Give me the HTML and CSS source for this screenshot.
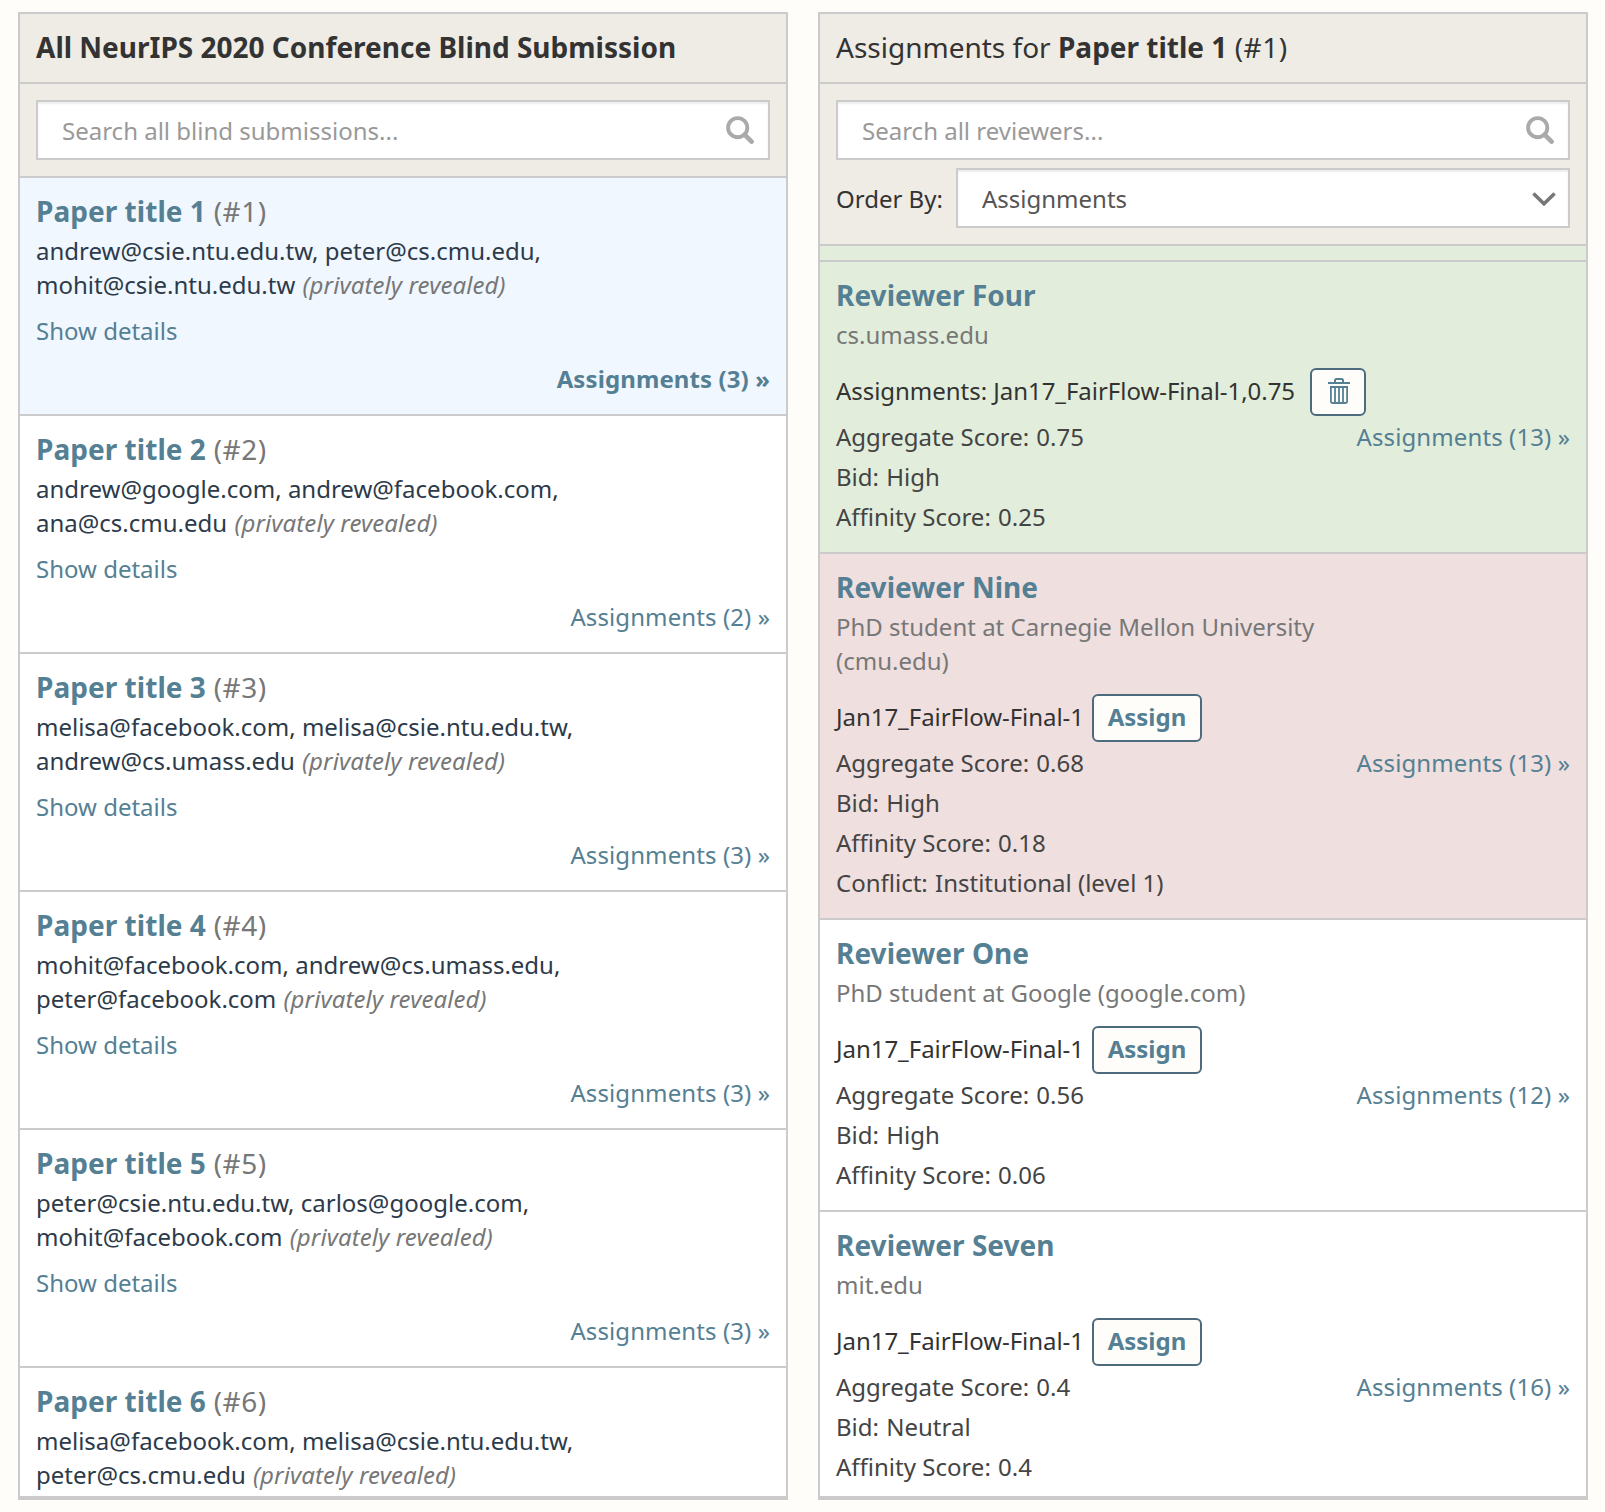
FILE: index.html
```html
<!DOCTYPE html>
<html lang="en">
<head>
<meta charset="utf-8">
<title>Assignment Browser</title>
<link rel="stylesheet" href="styles.css">
</head>
<body>
<svg class="sprite" aria-hidden="true">
  <symbol id="icon-search" viewBox="0 0 28 28"><circle cx="11.7" cy="11.7" r="9.6" fill="none" stroke="currentColor" stroke-width="3.9"/><path d="M18.6 18.6 25.6 25.6" stroke="currentColor" stroke-width="4.6" stroke-linecap="round"/></symbol>
  <symbol id="icon-chevron" viewBox="0 0 24 14"><path d="M1.4 1.5 12 11.8 22.6 1.5" fill="none" stroke="currentColor" stroke-width="3.6"/></symbol>
  <symbol id="icon-trash" viewBox="0 0 22 26"><path d="M0 5h22M7 5V2.5Q7 1 8.500 1h5Q15 1 15 2.500V5M2 9h18" fill="none" stroke="currentColor" stroke-width="2"/><path d="M2.900 9v14.500Q2.900 25 4.400 25h13.200Q19.100 25 19.100 23.500V9M7 9v16M11 9v16M15 9v16" fill="none" stroke="currentColor" stroke-width="1.800"/></symbol>
</svg>
<main class="browser">
  <section class="column">
    <h1 class="column-title"><strong>All NeurIPS 2020 Conference Blind Submission</strong></h1>
    <div class="filters">
      <div class="field placeholder"><span>Search all blind submissions...</span><svg class="search-icon"><use href="#icon-search"/></svg></div>
    </div>
    <ul class="items">
      <li class="item paper selected">
        <h2><a>Paper title 1</a> (#1)</h2>
        <p class="authors"><a>andrew@csie.ntu.edu.tw</a>, <a>peter@cs.cmu.edu</a>, <a>mohit@csie.ntu.edu.tw</a> <em>(privately revealed)</em></p>
        <a class="details">Show details</a>
        <a class="count">Assignments (3) »</a>
      </li>
      <li class="item paper">
        <h2><a>Paper title 2</a> (#2)</h2>
        <p class="authors"><a>andrew@google.com</a>, <a>andrew@facebook.com</a>, <a>ana@cs.cmu.edu</a> <em>(privately revealed)</em></p>
        <a class="details">Show details</a>
        <a class="count">Assignments (2) »</a>
      </li>
      <li class="item paper">
        <h2><a>Paper title 3</a> (#3)</h2>
        <p class="authors"><a>melisa@facebook.com</a>, <a>melisa@csie.ntu.edu.tw</a>, <a>andrew@cs.umass.edu</a> <em>(privately revealed)</em></p>
        <a class="details">Show details</a>
        <a class="count">Assignments (3) »</a>
      </li>
      <li class="item paper">
        <h2><a>Paper title 4</a> (#4)</h2>
        <p class="authors"><a>mohit@facebook.com</a>, <a>andrew@cs.umass.edu</a>, <a>peter@facebook.com</a> <em>(privately revealed)</em></p>
        <a class="details">Show details</a>
        <a class="count">Assignments (3) »</a>
      </li>
      <li class="item paper">
        <h2><a>Paper title 5</a> (#5)</h2>
        <p class="authors"><a>peter@csie.ntu.edu.tw</a>, <a>carlos@google.com</a>, <a>mohit@facebook.com</a> <em>(privately revealed)</em></p>
        <a class="details">Show details</a>
        <a class="count">Assignments (3) »</a>
      </li>
      <li class="item paper">
        <h2><a>Paper title 6</a> (#6)</h2>
        <p class="authors"><a>melisa@facebook.com</a>, <a>melisa@csie.ntu.edu.tw</a>, <a>peter@cs.cmu.edu</a> <em>(privately revealed)</em></p>
      </li>
    </ul>
  </section>

  <section class="column">
    <h1 class="column-title">Assignments for <strong>Paper title 1</strong> <span class="number">(#1)</span></h1>
    <div class="filters">
      <div class="field placeholder"><span>Search all reviewers...</span><svg class="search-icon"><use href="#icon-search"/></svg></div>
      <div class="order">
        <span class="order-label">Order By:</span>
        <div class="field select"><span>Assignments</span><svg class="chevron-icon"><use href="#icon-chevron"/></svg></div>
      </div>
    </div>
    <ul class="items">
      <li class="item assigned scrolled-past"></li>
      <li class="item assigned">
        <h2><a>Reviewer Four</a></h2>
        <p class="affiliation">cs.umass.edu</p>
        <div class="edge"><span class="edge-label">Assignments: Jan17_FairFlow-Final-1,0.75</span> <span class="button trash"><svg class="trash-icon"><use href="#icon-trash"/></svg></span></div>
        <div class="summary">
          <ul class="scores"><li>Aggregate Score: <span>0.75</span></li><li>Bid: <span>High</span></li><li>Affinity Score: <span>0.25</span></li></ul>
          <a>Assignments (13) »</a>
        </div>
      </li>
      <li class="item conflict">
        <h2><a>Reviewer Nine</a></h2>
        <p class="affiliation">PhD student at Carnegie Mellon University (cmu.edu)</p>
        <div class="edge"><span class="edge-label">Jan17_FairFlow-Final-1</span> <span class="button">Assign</span></div>
        <div class="summary">
          <ul class="scores"><li>Aggregate Score: <span>0.68</span></li><li>Bid: <span>High</span></li><li>Affinity Score: <span>0.18</span></li><li>Conflict: <span>Institutional (level 1)</span></li></ul>
          <a>Assignments (13) »</a>
        </div>
      </li>
      <li class="item">
        <h2><a>Reviewer One</a></h2>
        <p class="affiliation">PhD student at Google (google.com)</p>
        <div class="edge"><span class="edge-label">Jan17_FairFlow-Final-1</span> <span class="button">Assign</span></div>
        <div class="summary">
          <ul class="scores"><li>Aggregate Score: <span>0.56</span></li><li>Bid: <span>High</span></li><li>Affinity Score: <span>0.06</span></li></ul>
          <a>Assignments (12) »</a>
        </div>
      </li>
      <li class="item">
        <h2><a>Reviewer Seven</a></h2>
        <p class="affiliation">mit.edu</p>
        <div class="edge"><span class="edge-label">Jan17_FairFlow-Final-1</span> <span class="button">Assign</span></div>
        <div class="summary">
          <ul class="scores"><li>Aggregate Score: <span>0.4</span></li><li>Bid: <span>Neutral</span></li><li>Affinity Score: <span>0.4</span></li></ul>
          <a>Assignments (16) »</a>
        </div>
      </li>
    </ul>
  </section>
</main>
</body>
</html>
```
FILE: styles.css
```css
* { box-sizing: border-box; margin: 0; padding: 0; }

body {
  height: 1512px;
  overflow: hidden;
  background: #fffdfa;
  color: #333;
  font: 24px/34px "Noto Sans", sans-serif;
}

ul { list-style: none; }
svg { display: block; flex: none; }
.sprite { display: none; }

.browser {
  display: flex;
  gap: 30px;
  height: 1512px;
  padding: 12px 17px 12px 18px;
}

.column {
  display: flex;
  flex: none;
  flex-direction: column;
  width: 770px;
  border: 2px solid #cbcbcb;
  border-bottom-width: 4px;
  background: #fff;
}

.column-title {
  height: 70px;
  padding: 14px 16px 0;
  border-bottom: 2px solid #cbcbcb;
  background: #efebe5;
  font-size: 28px;
  font-weight: 400;
  line-height: 38px;
}
.number { letter-spacing: .5px; }

.filters {
  display: flex;
  flex-direction: column;
  gap: 8px;
  padding: 16px;
  border-bottom: 2px solid #cbcbcb;
  background: #efebe5;
}

.field {
  display: flex;
  flex: 1;
  align-items: center;
  justify-content: space-between;
  height: 60px;
  min-height: 60px;
  padding: 0 14px 0 24px;
  border: 2px solid #cbcbcb;
  background: #fff;
  box-shadow: inset 0 2px 2px rgba(0, 0, 0, .075);
  color: #555;
}

.field span, .order-label { margin-top: 2px; }
.placeholder { color: #999; }
.search-icon { width: 28px; height: 28px; color: #aaa; }
.select { padding-right: 12px; }
.chevron-icon { width: 24px; height: 14px; margin-top: 2px; color: #777; }
.order { display: flex; align-items: center; }
.order-label { width: 120px; }

.items { flex: 1; min-height: 0; overflow: hidden; }
.item { padding: 14px 16px 16px; border-bottom: 2px solid #cbcbcb; }
.paper { display: flex; flex-direction: column; height: 238px; }
.selected { background: #f0f7ff; }
.assigned { background: #e2eedb; }
.conflict { background: #efdfdf; }
.scrolled-past { height: 16px; padding: 0; }

h2 { color: #777; font-size: 28px; font-weight: 400; line-height: 38px; letter-spacing: .5px; }
h2 a { font-weight: 700; letter-spacing: .04px; }
a { color: #557f93; }

.authors { width: 550px; margin-top: 4px; }
.authors a { color: #2c3a4a; }
.authors em { margin-left: 1px; color: #777; letter-spacing: .08px; }
.details { margin-top: 12px; }
.count { align-self: flex-end; margin-top: 14px; }
.count, .summary > a { letter-spacing: .1px; }
.selected .count { font-weight: 700; }

.affiliation { width: 550px; margin-top: 4px; color: #777; }
.edge { display: flex; align-items: center; gap: 10px; height: 48px; margin-top: 16px; }
.edge-label { margin: -2px -2px 0 0; letter-spacing: -.04px; }

.button {
  display: flex;
  align-items: center;
  justify-content: center;
  width: 110px;
  height: 48px;
  padding-bottom: 2px;
  border: 2px solid #4d6b7c;
  border-radius: 6px;
  background: #fffdfa;
  color: #557f93;
  font-weight: 700;
}

.trash { width: 56px; margin-left: 7px; }
.trash-icon { width: 22px; height: 26px; margin: 0 0 0 2px; }

.summary { display: flex; justify-content: space-between; padding-top: 1px; margin-bottom: -1px; line-height: 40px; }
.scores { color: #444; }
.scores span { margin-left: 1px; }
```
